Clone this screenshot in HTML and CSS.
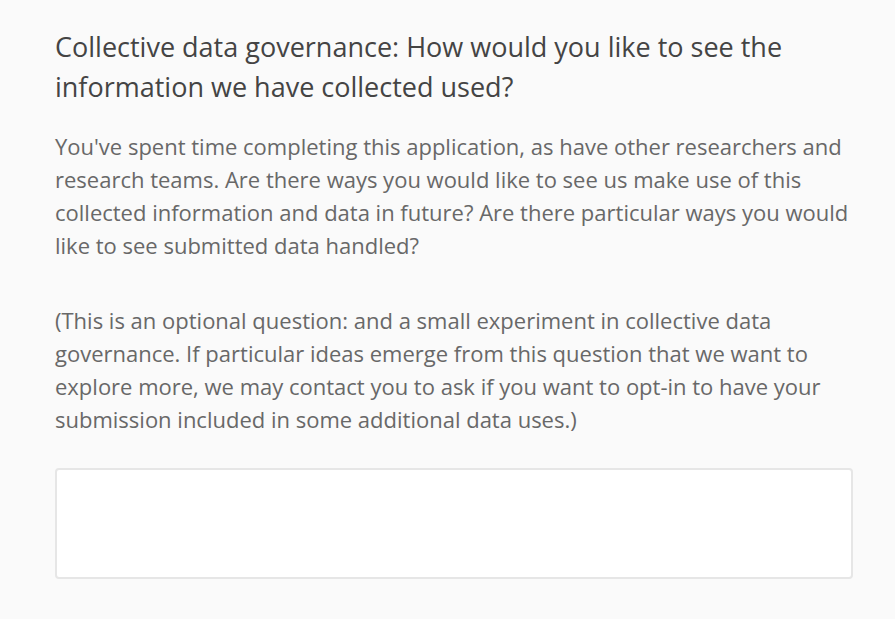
FILE: index.html
```html
<!DOCTYPE html>
<html lang="en">
<head>
<meta charset="utf-8">
<title>Collective data governance</title>
<link rel="stylesheet" href="styles.css">
</head>
<body>
<main class="question">
  <h2 class="question-title">Collective data governance: How would you like to see the information we have collected used?</h2>
  <div class="question-help">
    <p>You've spent time completing this application, as have other researchers and research teams. Are there ways you would like to see us make use of this collected information and data in future? Are there particular ways you would like to see submitted data handled?</p>
    <p>(This is an optional question: and a small experiment in collective data governance. If particular ideas emerge from this question that we want to explore more, we may contact you to ask if you want to opt-in to have your submission included in some additional data uses.)</p>
  </div>
  <textarea class="answer" aria-label="Answer"></textarea>
</main>
</body>
</html>
```
FILE: styles.css
```css
html, body {
  margin: 0;
  padding: 0;
  background: #fafafa;
}
body {
  font-family: "Open Sans", "Noto Sans", sans-serif;
  height: 619px;
  overflow: hidden;
}
.question {
  padding: 27px 0 0 55px;
  width: 800px;
}
.question-title {
  margin: 0;
  font-size: 27px;
  font-weight: 400;
  line-height: 40px;
  color: #444444;
}
.question-help {
  margin-top: 23px;
  color: #686868;
  font-size: 22px;
  line-height: 33px;
}
.question-help p {
  margin: 0 0 42px 0;
}
.question-help p:last-child {
  margin-bottom: 0;
}
.answer {
  display: block;
  box-sizing: border-box;
  margin-top: 32px;
  width: 798px;
  height: 111px;
  border: 2px solid #e6e6e6;
  border-radius: 4px;
  background: #ffffff;
  resize: none;
  font: inherit;
}
```
